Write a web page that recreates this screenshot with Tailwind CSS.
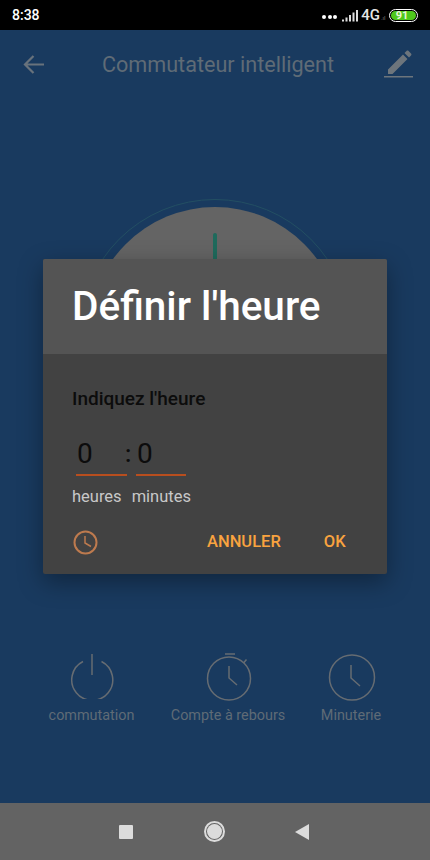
<!DOCTYPE html>
<html lang="fr">
<head>
    <meta charset="UTF-8">
    <meta name="viewport" content="width=device-width, initial-scale=1.0">
    <title>Commutateur intelligent</title>
    <script src="https://cdn.jsdelivr.net/npm/@tailwindcss/browser@4"></script>
</head>
<body class="bg-[#193a5f] font-['Roboto',sans-serif]">
<div class="relative w-[430px] h-[860px] overflow-hidden flex flex-col bg-[#193a5f]">

    <!-- status bar -->
    <div class="h-[30px] bg-black flex items-center justify-between pl-3 pr-[12px] text-white shrink-0">
        <span class="text-[14px] font-medium leading-none">8:38</span>
        <div class="flex items-center">
            <div class="flex gap-[1.5px] mt-[3px]">
                <span class="w-[4px] h-[4px] rounded-full bg-white"></span>
                <span class="w-[4px] h-[4px] rounded-full bg-white"></span>
                <span class="w-[4px] h-[4px] rounded-full bg-white"></span>
            </div>
            <svg class="ml-[5px]" width="17" height="13" viewBox="0 0 17 13" fill="#ddd">
                <rect x="0" y="10.5" width="2" height="2"/><rect x="3.5" y="8.5" width="2" height="4"/><rect x="7" y="6" width="2" height="6.5"/><rect x="10.5" y="3.5" width="2" height="9"/><rect x="14" y="1" width="2" height="11.5"/>
            </svg>
            <span class="ml-[2px] text-[15px] font-medium leading-none text-[#e6e6e6]">4G</span>
            <span class="text-[6px] leading-none text-[#777] mt-[6px] w-[5px] ml-[1px]">.ıl</span>
            <div class="ml-[3px] w-[29px] h-[13px] rounded-full border border-white p-[1px] flex">
                <div class="w-full rounded-full bg-[#4fc81c] flex items-center justify-center text-[11px] font-bold leading-none text-[#eaf5d8] pr-[3px]">91</div>
            </div>
        </div>
    </div>

    <!-- app bar -->
    <div class="h-[68px] flex items-center justify-between pl-[23px] pr-[17px] shrink-0">
        <svg width="21" height="19" viewBox="0 0 21 19" fill="none" stroke="#68727c" stroke-width="2.2">
            <path d="M21 9.5H2M10.5 1L2 9.5l8.5 8.5"/>
        </svg>
        <span class="text-[21.6px] leading-none text-[#5f6b76] ml-[8px] mt-[2px]">Commutateur intelligent</span>
        <svg width="29" height="30" viewBox="0 0 29 30" class="mt-[-2px]" fill="#6d757c">
            <path d="M4 21.500L19 6.500l4.500 4.500L8.500 26H4zM20.500 5l2-2c.6-.6 1.500-.6 2.100 0l2.400 2.400c.6.600.6 1.500 0 2.100l-2 2z"/>
            <rect x="0" y="28" width="29" height="1.500"/>
        </svg>
    </div>

    <!-- main switch dial, behind the dialog -->
    <div class="relative flex-1">
        <div class="absolute left-[79px] top-[101px] w-[272px] h-[272px] rounded-full border border-[#234f63]"></div>
        <div class="absolute left-[89px] top-[109px] w-[252px] h-[252px] rounded-full bg-[#646464]"></div>
        <div class="absolute left-[213px] top-[135px] w-[4px] h-[30px] rounded-full bg-[#1f6a5c]"></div>

        <!-- bottom actions -->
        <div class="absolute left-0 top-[555px] w-full h-[100px] text-[14.4px] leading-none text-[#5f6b76]">
            <div class="absolute left-[49px] top-0 flex flex-col items-center w-[85px]">
                <svg width="44" height="46" viewBox="0 0 44 46" fill="none" stroke="#666c72" stroke-width="1.500">
                    <path d="M13 8.500a20.500 20.500 0 1 0 18.500 0M22 1v21"/>
                </svg>
                <span class="absolute top-[56px] whitespace-nowrap">commutation</span>
            </div>
            <div class="absolute left-[171px] top-0 flex flex-col items-center w-[114px]">
                <svg class="ml-[4px]" width="50" height="48" viewBox="0 0 50 48" fill="none" stroke="#666c72" stroke-width="1.500">
                    <path d="M20 1h10"/>
                    <circle cx="24" cy="25.500" r="21.500"/>
                    <path d="M38.500 10l3-3.500M24 13v12l8 7"/>
                </svg>
                <span class="absolute top-[56px] whitespace-nowrap">Compte à rebours</span>
            </div>
            <div class="absolute left-[321px] top-0 flex flex-col items-center w-[60px]">
                <svg class="ml-[2px]" width="48" height="48" viewBox="0 0 48 48" fill="none" stroke="#666c72" stroke-width="1.500">
                    <circle cx="24" cy="24.500" r="22.500"/>
                    <path d="M23 12v13l9 8"/>
                </svg>
                <span class="absolute top-[56px] whitespace-nowrap">Minuterie</span>
            </div>
        </div>
    </div>

    <!-- nav bar -->
    <div class="h-[57px] bg-[#636363] flex items-center shrink-0 relative">
        <div class="absolute left-[119px] top-[22px] w-[14px] h-[14px] bg-[#dcdcdc] rounded-[1px]"></div>
        <div class="absolute left-[204px] top-[18px] w-[21px] h-[21px] rounded-full border-2 border-[#dcdcdc] p-[1px]">
            <div class="w-full h-full rounded-full bg-[#dcdcdc]"></div>
        </div>
        <svg class="absolute left-[295px] top-[21px]" width="14" height="16" viewBox="0 0 14 16" fill="#dcdcdc"><path d="M14 0v16L0 8z"/></svg>
    </div>

    <!-- dialog -->
    <div class="absolute left-[43px] top-[259px] w-[344px] h-[315px] rounded-[2px] bg-[#424242] shadow-[0_8px_24px_rgba(0,0,0,0.35)] overflow-hidden">
        <div class="h-[95px] bg-[#545454] pl-[29px] pt-[23px]">
            <h1 class="text-[40.5px] font-medium leading-[48px] text-white">Définir l'heure</h1>
        </div>
        <div class="pl-[29px] pt-[35px]">
            <p class="text-[19px] font-medium leading-5 text-[#0c0c0c]">Indiquez l'heure</p>
            <div class="flex mt-[26px] ml-[4px] items-start text-[#0c0c0c]">
                <div class="w-[51px] h-[41px] border-b-2 border-[#b84e1e] text-[28px] leading-[38px] pl-[1px]">0</div>
                <span class="w-[9px] -ml-[2px] mr-[2px] text-[24px] leading-[38px] text-left font-medium">:</span>
                <div class="w-[50px] h-[41px] border-b-2 border-[#b84e1e] text-[28px] leading-[38px] pl-[1px]">0</div>
            </div>
            <div class="flex gap-[10px] mt-[11px] text-[16.5px] leading-5 text-[#c8c8c8]">
                <span>heures</span>
                <span>minutes</span>
            </div>
        </div>
        <div class="flex items-center mt-[23px] pl-[30px] text-[16.5px] font-medium leading-none text-[#f9a33f]">
            <svg width="25" height="25" viewBox="0 0 25 25" fill="none" stroke="#bd7a4e" stroke-width="2">
                <circle cx="12.500" cy="12.500" r="11"/>
                <path d="M12 6v7l6 3.500" stroke-width="1.500"/>
            </svg>
            <span class="ml-[109px]">ANNULER</span>
            <span class="ml-[43px]">OK</span>
        </div>
    </div>
</div>
</body>
</html>
